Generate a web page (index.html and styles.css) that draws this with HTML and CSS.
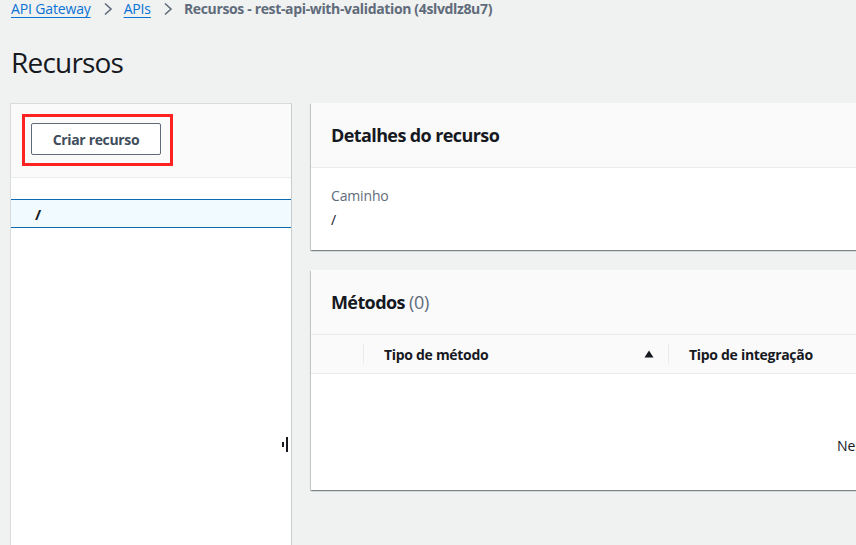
FILE: index.html
```html
<!DOCTYPE html>
<html lang="pt">
<head>
<meta charset="utf-8">
<title>Recursos</title>
<link rel="stylesheet" href="styles.css">
</head>
<body>
<nav class="breadcrumb">
  <a class="crumb-link" href="#">API Gateway</a>
  <svg class="chev" width="10" height="14" viewBox="0 0 10 14"><path d="M2 1.5 L8 7 L2 12.5" fill="none" stroke="#5f6b7a" stroke-width="1.6"/></svg>
  <a class="crumb-link" href="#">APIs</a>
  <svg class="chev" width="10" height="14" viewBox="0 0 10 14"><path d="M2 1.5 L8 7 L2 12.5" fill="none" stroke="#5f6b7a" stroke-width="1.6"/></svg>
  <span class="crumb-current">Recursos - rest-api-with-validation (4slvdlz8u7)</span>
</nav>
<h1 class="page-title">Recursos</h1>
<div class="layout">
  <aside class="tree-panel">
    <div class="tree-header">
      <div class="highlight">
        <button class="btn">Criar recurso</button>
      </div>
    </div>
    <div class="tree-body">
      <div class="tree-row selected"><span class="tree-path">/</span></div>
    </div>
    <div class="resize-handle"><span class="bar-s"></span><span class="bar-l"></span></div>
  </aside>
  <main class="content">
    <section class="card">
      <div class="card-header"><h2 class="card-title">Detalhes do recurso</h2></div>
      <div class="card-body">
        <div class="label">Caminho</div>
        <div class="value">/</div>
      </div>
    </section>
    <section class="card methods">
      <div class="card-header"><h2 class="card-title">Métodos <span class="count">(0)</span></h2></div>
      <div class="table-head">
        <div class="th th-check"></div>
        <div class="th th-method"><span>Tipo de método</span><svg class="sort" width="10" height="8" viewBox="0 0 10 8"><path d="M5 0.5 L9.5 7.5 L0.5 7.5 Z" fill="#16191f"/></svg></div>
        <div class="th th-int"><span>Tipo de integração</span></div>
      </div>
      <div class="table-empty"><span class="empty-text">Nenhum método</span></div>
    </section>
  </main>
</div>
</body>
</html>
```

FILE: styles.css
```css
* { box-sizing: border-box; }
html, body { margin: 0; padding: 0; }
body {
  width: 856px;
  height: 545px;
  overflow: hidden;
  background: #f0f1f1;
  font-family: "Open Sans", "Noto Sans", sans-serif;
  font-size: 14px;
  letter-spacing: -0.15px;
  color: #16191f;
}
.breadcrumb {
  display: flex;
  align-items: center;
  height: 18px;
  padding-left: 11px;
  line-height: 18px;
  white-space: nowrap;
}
.crumb-link {
  color: #0972d3;
  text-decoration: underline;
  text-underline-offset: 3px;
  text-decoration-thickness: 1px;
}
.chev { margin: 0 11px 0 12px; }
.crumb-current { color: #5f6b7a; font-weight: 700; letter-spacing: -0.35px; }
.page-title {
  margin: 26px 0 0 11px;
  font-size: 28px;
  line-height: 36px;
  font-weight: 400;
  letter-spacing: -0.8px;
  color: #16191f;
}
.layout {
  display: flex;
  margin-top: 23px;
  padding-left: 10px;
  gap: 19px;
  height: 442px;
}
.tree-panel {
  position: relative;
  flex: 0 0 282px;
  background: #fff;
  border: 1px solid #dadcdc;
  border-right-color: #c9cccc;
  border-bottom: none;
  display: flex;
  flex-direction: column;
}
.tree-header {
  height: 74px;
  background: #fafafa;
  border-bottom: 1px solid #e9ebed;
  padding: 10px 0 0 11px;
}
.highlight {
  display: inline-block;
  border: 3px solid #ff2222;
  padding: 6px 9px 8px 6px;
}
.btn {
  display: block;
  width: 130px;
  height: 32px;
  background: #fff;
  border: 1px solid #5f6b7a;
  border-radius: 2px;
  font-family: inherit;
  font-size: 14px;
  font-weight: 700;
  letter-spacing: -0.35px;
  color: #414d5c;
  padding: 0;
}
.tree-body { padding-top: 21px; }
.tree-row {
  height: 29px;
  display: flex;
  align-items: center;
  padding-left: 24px;
}
.tree-row.selected {
  background: #f1faff;
  border-top: 1px solid #0b6bb0;
  border-bottom: 1px solid #0b6bb0;
}
.tree-path { font-weight: 700; font-size: 15px; }
.resize-handle {
  position: absolute;
  right: 3px;
  top: 333px;
  display: flex;
  align-items: center;
  gap: 2px;
}
.bar-s { width: 2px; height: 5px; background: #16191f; }
.bar-l { width: 2px; height: 15px; background: #16191f; }
.content {
  flex: 0 0 1152px;
  display: flex;
  flex-direction: column;
  gap: 20px;
}
.card {
  background: #fff;
  box-shadow: 0 1px 1px 0 rgba(0,28,36,.3), 1px 1px 1px 0 rgba(0,28,36,.15), -1px 1px 1px 0 rgba(0,28,36,.15);
}
.card-header {
  height: 65px;
  background: #fafafa;
  border-bottom: 1px solid #e9ebed;
  display: flex;
  align-items: center;
  padding-left: 20px;
}
.card-title {
  margin: 0;
  font-size: 18px;
  font-weight: 700;
  letter-spacing: -0.6px;
  color: #16191f;
}
.count { font-weight: 400; color: #5f6b7a; letter-spacing: -0.3px; }
.card-body { padding: 17px 20px 0; height: 82px; }
.label { color: #5f6b7a; line-height: 22px; }
.value { line-height: 26px; }
.table-head {
  display: flex;
  height: 39px;
  background: #fafafa;
  border-bottom: 1px solid #e9ebed;
  font-weight: 700;
  letter-spacing: -0.3px;
  align-items: center;
}
.th { display: flex; align-items: center; height: 20px; }
.th-check { width: 53px; border-right: 1px solid #e9ebed; }
.th-method {
  width: 305px;
  padding: 0 14px 0 20px;
  justify-content: space-between;
  border-right: 1px solid #e9ebed;
}
.sort { display: block; }
.th-int { padding-left: 20px; }
.table-empty {
  height: 116px;
  display: flex;
  justify-content: center;
  align-items: center;
  padding: 26px 0 0 10px;
}
```
